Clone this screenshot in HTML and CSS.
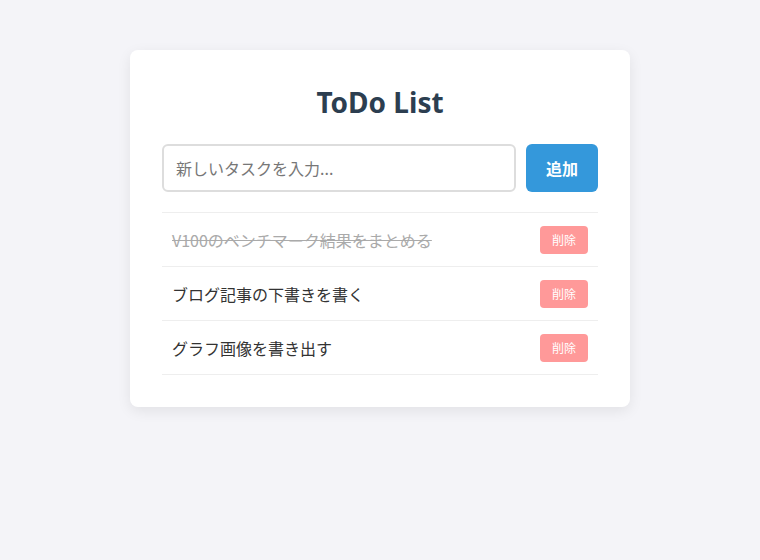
FILE: index.html
```html
<!DOCTYPE html>
<html lang="ja">
<head>
<meta charset="utf-8">
<title>ToDo List</title>
<link rel="stylesheet" href="styles.css">
</head>
<body>
<div class="card">
  <h1 class="title">ToDo List</h1>
  <div class="form">
    <input class="task-input" type="text" placeholder="新しいタスクを入力...">
    <button class="add-btn">追加</button>
  </div>
  <ul class="list">
    <li class="item done"><span class="text">V100のベンチマーク結果をまとめる</span><button class="del-btn">削除</button></li>
    <li class="item"><span class="text">ブログ記事の下書きを書く</span><button class="del-btn">削除</button></li>
    <li class="item"><span class="text">グラフ画像を書き出す</span><button class="del-btn">削除</button></li>
  </ul>
</div>
</body>
</html>
```
FILE: styles.css
```css
html, body {
  margin: 0;
  padding: 0;
}
body {
  background: #f4f4f8;
  font-family: "Open Sans", "Noto Sans CJK JP", sans-serif;
  color: #333;
  height: 560px;
}
.card {
  width: 436px;
  margin: 50px auto 0;
  background: #fff;
  border-radius: 8px;
  padding: 32px;
  box-shadow: 0 4px 14px rgba(0, 0, 0, 0.08);
}
.title {
  margin: 0;
  text-align: center;
  font-size: 28px;
  line-height: 40px;
  font-weight: 700;
  color: #2c3e50;
  font-family: "Noto Sans", "Noto Sans CJK JP", sans-serif;
}
.form {
  display: flex;
  gap: 10px;
  margin-top: 22px;
}
.task-input {
  flex: 1;
  height: 48px;
  box-sizing: border-box;
  border: 2px solid #ddd;
  border-radius: 6px;
  padding: 0 12px;
  font-size: 16px;
  font-family: "Noto Sans CJK JP", sans-serif;
  color: #333;
  outline: none;
}
.task-input::placeholder {
  color: #777;
}
.add-btn {
  width: 72px;
  height: 48px;
  border: none;
  border-radius: 6px;
  background: #3498db;
  color: #fff;
  font-size: 16px;
  font-weight: 700;
  font-family: "Noto Sans CJK JP", sans-serif;
}
.list {
  list-style: none;
  margin: 20px 0 0;
  padding: 0;
  border-top: 1px solid #eee;
}
.item {
  display: flex;
  align-items: center;
  justify-content: space-between;
  height: 53px;
  padding: 0 10px;
  border-bottom: 1px solid #eee;
}
.text {
  font-size: 16px;
  font-family: "Noto Sans CJK JP", sans-serif;
  color: #333;
}
.done .text {
  color: #aaa;
  text-decoration: line-through;
}
.del-btn {
  width: 48px;
  height: 28px;
  border: none;
  border-radius: 4px;
  background: #ff9999;
  color: #fff;
  font-size: 12px;
  font-family: "Noto Sans CJK JP", sans-serif;
  padding: 0;
}
```
